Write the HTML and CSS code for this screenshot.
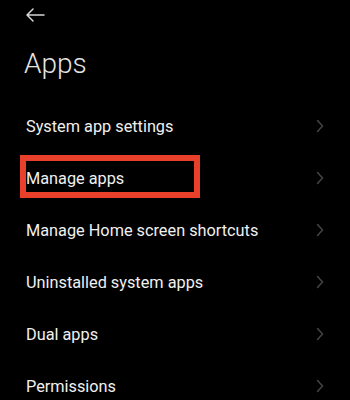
FILE: index.html
```html
<!DOCTYPE html>
<html>
<head>
<meta charset="utf-8">
<link rel="stylesheet" href="styles.css">
</head>
<body>
<div class="screen">
  <div class="topbar">
    <svg class="back" width="20" height="14" viewBox="0 0 20 14">
      <path d="M19 7H2M8 1L2 7l6 6" fill="none" stroke="#d6d6d6" stroke-width="1.5" stroke-linecap="round" stroke-linejoin="round"/>
    </svg>
  </div>
  <h1 class="title">Apps</h1>
  <ul class="list">
    <li class="row"><span class="label">System app settings</span><svg class="chev" width="8" height="14" viewBox="0 0 8 14"><path d="M1.5 1.5L6.5 7l-5 5.5" fill="none" stroke="#464646" stroke-width="1.4" stroke-linecap="round" stroke-linejoin="round"/></svg></li>
    <li class="row"><span class="label">Manage apps</span><svg class="chev" width="8" height="14" viewBox="0 0 8 14"><path d="M1.5 1.5L6.5 7l-5 5.5" fill="none" stroke="#464646" stroke-width="1.4" stroke-linecap="round" stroke-linejoin="round"/></svg><span class="highlight"></span></li>
    <li class="row"><span class="label">Manage Home screen shortcuts</span><svg class="chev" width="8" height="14" viewBox="0 0 8 14"><path d="M1.5 1.5L6.5 7l-5 5.5" fill="none" stroke="#464646" stroke-width="1.4" stroke-linecap="round" stroke-linejoin="round"/></svg></li>
    <li class="row"><span class="label">Uninstalled system apps</span><svg class="chev" width="8" height="14" viewBox="0 0 8 14"><path d="M1.5 1.5L6.5 7l-5 5.5" fill="none" stroke="#464646" stroke-width="1.4" stroke-linecap="round" stroke-linejoin="round"/></svg></li>
    <li class="row"><span class="label">Dual apps</span><svg class="chev" width="8" height="14" viewBox="0 0 8 14"><path d="M1.5 1.5L6.5 7l-5 5.5" fill="none" stroke="#464646" stroke-width="1.4" stroke-linecap="round" stroke-linejoin="round"/></svg></li>
    <li class="row"><span class="label">Permissions</span><svg class="chev" width="8" height="14" viewBox="0 0 8 14"><path d="M1.5 1.5L6.5 7l-5 5.5" fill="none" stroke="#464646" stroke-width="1.4" stroke-linecap="round" stroke-linejoin="round"/></svg></li>
  </ul>
</div>
</body>
</html>
```
FILE: styles.css
```css
html, body {
  margin: 0;
  padding: 0;
  background: #000;
}
.screen {
  width: 350px;
  height: 400px;
  overflow: hidden;
  background: #000;
  font-family: Roboto, "Noto Sans", sans-serif;
  color: #ececec;
}
.topbar {
  height: 30px;
  display: flex;
  align-items: center;
  padding-left: 25px;
}
.back {
  display: block;
}
.title {
  margin: 0;
  padding: 17px 0 0 24px;
  box-sizing: border-box;
  height: 70px;
  font-size: 28px;
  line-height: 34px;
  font-weight: 300;
  color: #e4e4e4;
}
.list {
  list-style: none;
  margin: 0;
  padding: 0;
}
.row {
  position: relative;
  height: 52px;
  display: flex;
  align-items: center;
  justify-content: space-between;
  padding: 0 26px 0 26px;
}
.label {
  font-size: 16.3px;
  font-weight: 400;
  color: #f0f0f0;
}
.chev {
  display: block;
}
.highlight {
  position: absolute;
  left: 20px;
  top: 3px;
  width: 180px;
  height: 43px;
  box-sizing: border-box;
  border: 6px solid #e8402a;
}
```
